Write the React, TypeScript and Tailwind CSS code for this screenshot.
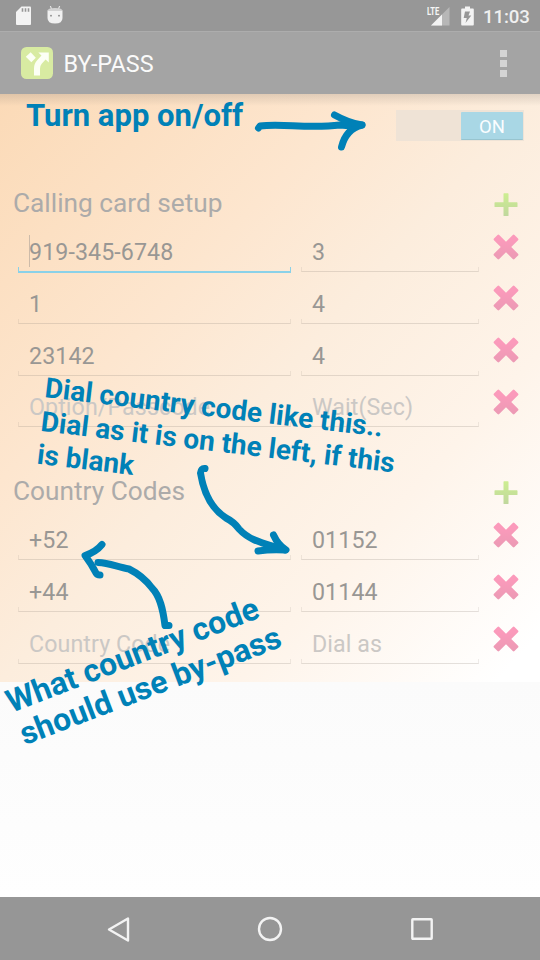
import React from "react";

type Row = { left: string; right: string; hint?: boolean; focused?: boolean };

const cards: Row[] = [
  { left: "919-345-6748", right: "3", focused: true },
  { left: "1", right: "4" },
  { left: "23142", right: "4" },
  { left: "Option/Passcode", right: "Wait(Sec)", hint: true },
];

const codes: Row[] = [
  { left: "+52", right: "01152" },
  { left: "+44", right: "01144" },
  { left: "Country Code", right: "Dial as", hint: true },
];

function Field({ text, hint, focused, wide }: { text: string; hint?: boolean; focused?: boolean; wide?: boolean }) {
  return (
    <div className={"relative h-[48px] shrink-0 pl-[11px] " + (wide ? "w-[273.4px]" : "w-[178.5px]")}>
      <span className={"block text-[23.2px] leading-[57px] tracking-[0.1px] whitespace-nowrap " + (hint ? "text-[#cbc8c5]" : "text-[#999794]")}>{text}</span>
      {focused && <i className="absolute left-[11px] top-[11px] h-8 w-px bg-[#cdbba9]" />}
      <i
        className={
          "absolute left-0 right-0 " +
          (focused ? "-bottom-px h-[6px] border-x border-b-2 border-[#8ad1e8]" : "bottom-0 h-[5px] border-x border-b border-x-[#968c82]/15 border-b-[#968c82]/25")
        }
      />
    </div>
  );
}

function Plus() {
  return (
    <svg className="block" width="26" height="26" viewBox="0 0 26 26">
      <defs>
        <linearGradient id="plus" x1="0" y1="0" x2="0" y2="1">
          <stop offset="0" stopColor="#cdee91" />
          <stop offset="1" stopColor="#c0d79d" />
        </linearGradient>
      </defs>
      <path d="M11.100 1.200h3.800q.6 0 .6.6v8.500h8.400q.6 0 .6.6v3.600q0 .6-.6.6h-8.400v8.400q0 .6-.6.6h-3.800q-.6 0-.6-.6v-8.400H2.100q-.6 0-.6-.6v-3.600q0-.6.6-.6h8.400V1.800q0-.6.6-.6z" fill="url(#plus)" />
    </svg>
  );
}

function Cross() {
  return (
    <svg className="block" width="26" height="26" viewBox="-13 -13 26 26">
      <defs>
        <linearGradient id="cross" gradientUnits="userSpaceOnUse" x1="-5" y1="-5" x2="7" y2="7">
          <stop offset="0" stopColor="#fb9abb" />
          <stop offset="1" stopColor="#ed9ab5" />
        </linearGradient>
      </defs>
      <path
        transform="rotate(45)"
        d="M-13.300-3.700H-3.700V-13.300q0-1.200 1.200-1.200h5q1.200 0 1.200 1.200V-3.700H13.300q1.200 0 1.200 1.200v5q0 1.200-1.200 1.200H3.700V13.300q0 1.200-1.200 1.200h-5q-1.200 0-1.200-1.200V3.700H-13.300q-1.200 0-1.200-1.200v-5q0-1.200 1.200-1.200z"
        fill="url(#cross)"
      />
    </svg>
  );
}

function Section({ title, rows }: { title: string; rows: Row[] }) {
  return (
    <section>
      <div className="flex h-[44px] items-center pl-[13px] pr-[21px]">
        <h2 className="flex-1 pt-[2px] text-[26.25px] font-normal leading-[44px] text-[#acabaa]">{title}</h2>
        <div className="pt-[5px]"><Plus /></div>
      </div>
      {rows.map((r) => (
        <div key={r.left} className="flex h-[51.8px] items-start gap-[9.6px] pl-[18px] pr-[21px]">
          <Field text={r.left} hint={r.hint} focused={r.focused} wide />
          <Field text={r.right} hint={r.hint} />
          <div className="ml-auto pt-[9.7px]"><Cross /></div>
        </div>
      ))}
    </section>
  );
}

function StatusBar() {
  return (
    <div className="flex h-8 items-center border-b border-[#adadad] bg-[#979797] pl-4 pr-[11px]">
      <svg className="block" width="48" height="20" viewBox="0 0 48 20">
        <path d="M5.500.5H14q1 0 1 1V18q0 1-1 1H1q-1 0-1-1V6z" fill="#f3f3f3" />
        <path d="M6.500 2.200v3.600M9.500 2.200v3.600M12.500 2.200v3.600" stroke="#979797" strokeWidth="1.600" />
        <path d="M31.500 4.500h15V12q0 5.500-7.500 5.500T31.500 12z" fill="#f0f0f0" />
        <path d="M34.300-.2l1.300 3.500M43.700-.2l-1.300 3.500" stroke="#e6e6e6" strokeWidth="1.100" />
        <path d="M31.500 5q0-3 7.500-3t7.500 3z" fill="#d2d2d2" />
        <circle cx="35" cy="9.700" r=".9" fill="#888" />
        <circle cx="43" cy="9.700" r=".9" fill="#888" />
      </svg>
      <div className="relative ml-auto h-5 w-6">
        <svg className="block" width="24" height="20" viewBox="0 0 24 20">
          <path d="M23.500 1v18.500H5z" fill="#b7b7b7" />
          <path d="M16 8.500v11H5z" fill="#f3f3f3" />
        </svg>
        <span className="absolute left-px top-0 origin-left scale-x-[0.66] text-[11.500px] font-bold leading-[11px] text-[#f6f6f6]">LTE</span>
      </div>
      <svg className="ml-[11px] block" width="13" height="20" viewBox="0 0 13 20">
        <path d="M4 .5h5v2h3q.8 0 .8 1v15q0 1-.8 1H1q-.8 0-.8-1v-15q0-1 .8-1h3z" fill="#f3f3f3" />
        <path d="M4 5.500h5L7.500 9.500h2.800L4.500 17 5.800 12H2.700z" fill="#979797" />
      </svg>
      <span className="ml-[9px] w-[46px] whitespace-nowrap pt-[2px] text-[18.700px] font-medium leading-8 tracking-[-0.15px] text-[#f0f0f0]">11:03</span>
    </div>
  );
}

function ActionBar() {
  return (
    <header className="flex h-[62px] items-center bg-[#a4a4a4] pl-[21px] pr-[33px]">
      <svg className="block" width="32" height="32" viewBox="0 0 32 32">
        <rect width="32" height="32" rx="5.500" fill="#d8eba2" />
        <path d="M4.800 9.700 9.700 5.200 14.800 10.700 10.300 15.300z" fill="#fcfff5" />
        <path d="M17.300 5.600H27.800V15.600l-3.200-3.200-3.900 4.300q-1.700 2-1.700 5v6.700H13v-7q0-4.800 3.200-8.200l4.300-4.700z" fill="#fcfff5" />
      </svg>
      <h1 className="ml-[10.500px] pt-[3px] text-[23.400px] font-normal text-[#fafafa]">BY-PASS</h1>
      <div className="ml-auto flex flex-col gap-[3px]">
        <i className="size-[7px] bg-[#d4d4d4]" />
        <i className="size-[7px] bg-[#d4d4d4]" />
        <i className="size-[7px] bg-[#d4d4d4]" />
      </div>
    </header>
  );
}

function Coach() {
  return (
    <div className="pointer-events-none absolute inset-0 text-[27.950px] font-bold leading-[33.600px] text-[#0081b7]">
      <p className="absolute left-[26px] top-[99px] whitespace-nowrap text-[31px]">Turn app on/off</p>
      <p className="absolute left-[43.500px] top-[371px] origin-[0_26px] rotate-[6.700deg] whitespace-nowrap">
        Dial country code like this..<br />Dial as it is on the left, if this<br />is blank
      </p>
      <p className="absolute left-[11px] top-[685px] origin-[0_27px] rotate-[-21deg] whitespace-nowrap text-[31.800px] leading-[34.500px]">
        What country code<br />
        <span className="ml-px">should use by-pass</span>
      </p>
      <svg className="absolute inset-0" width="540" height="960" viewBox="0 0 540 960" fill="none" stroke="#0081b7" strokeWidth="7" strokeLinecap="round" strokeLinejoin="round">
        <path d="M258.500 128 260 126C282 123 307 129 340 125Q352 126 362 125" />
        <path d="M334.500 115Q349 123 362 125Q346 129 341.500 147" />
        <path d="M350 122 362 125 349 129z" fill="#0081b7" strokeWidth="3" />
        <path d="M205 468.500Q201 468 200.500 473C204 495 212 509 226 518Q234 522 239 529C250 541 263 543 285 550" />
        <path d="M273.500 535Q278 545 286 550Q271 549 258 551" />
        <path d="M169 625.500H165C163 609 160 596 152 588Q143 576 129 569C117 567 110 563 98 562.500" />
        <path d="M102 544.500Q96 552 85 555.500Q92 565 96 573Q97 575 100 575" />
      </svg>
    </div>
  );
}

export default function App() {
  return (
    <div className="relative flex h-[960px] w-[540px] flex-col overflow-hidden bg-[#fdfdfd] font-[Roboto,sans-serif]">
      <StatusBar />
      <ActionBar />
      <main className="relative h-[588px] shrink-0 bg-[linear-gradient(to_bottom_right,#fbdab7,#fde6cf_33%,#fceddd_50%,#fef4ea_72%,#ffffff_96%)]">
        <div className="absolute inset-x-0 top-0 h-[12px] bg-linear-to-b from-[#8c8279]/25 to-transparent" />
        <div className="flex h-[86px] justify-end pr-4 pt-4">
          <div className="flex h-[31px] w-[128px] justify-end bg-[#efe3d6] pr-px pt-[2px]">
            <div className="h-7 w-[62px] rounded-[1px] border-b border-[#98c4cf] bg-[#a9d7e5] text-center text-[18.500px] leading-[30px] text-[#fafdff]">ON</div>
          </div>
        </div>
        <Section title="Calling card setup" rows={cards} />
        <div className="h-[37.300px]" />
        <Section title="Country Codes" rows={codes} />
      </main>
      <div className="flex-1 bg-linear-to-b from-[#fbfbfb] to-[#fefefe]" />
      <nav className="flex h-[63px] shrink-0 items-center justify-between bg-[#969696] px-[106px]">
        <svg width="24" height="26" viewBox="0 0 24 26" fill="none" stroke="#f3f3f3" strokeWidth="2.400" strokeLinejoin="round"><path d="M22 2.500v22L3 13.500z" /></svg>
        <svg width="26" height="26" viewBox="0 0 26 26" fill="none" stroke="#f3f3f3" strokeWidth="2.400"><circle cx="13" cy="13" r="11" /></svg>
        <svg width="24" height="26" viewBox="0 0 24 26" fill="none" stroke="#f3f3f3" strokeWidth="2.400"><rect x="2.300" y="3.300" width="19.400" height="19.400" rx=".5" /></svg>
      </nav>
      <Coach />
    </div>
  );
}
